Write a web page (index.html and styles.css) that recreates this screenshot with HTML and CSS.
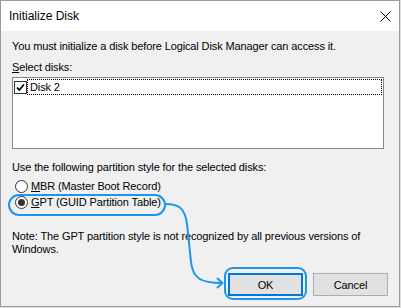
FILE: index.html
```html
<!DOCTYPE html>
<html>
<head>
<meta charset="utf-8">
<link rel="stylesheet" href="styles.css">
</head>
<body>
<div class="window">
  <div class="titlebar">
    <span class="title">Initialize Disk</span>
    <svg class="close" width="11" height="11" viewBox="0 0 11 11"><path d="M0.5 0.5 L10.5 10.5 M10.5 0.5 L0.5 10.5" stroke="#000" stroke-width="1" fill="none"/></svg>
  </div>
  <div class="content">
    <p class="intro">You must initialize a disk before Logical Disk Manager can access it.</p>
    <p class="label"><u>S</u>elect disks:</p>
    <div class="listbox">
      <div class="item">
        <span class="check"><svg width="11" height="11" viewBox="0 0 11 11"><path d="M2 5.5 L4.3 8 L9 2.5" stroke="#000" stroke-width="1.8" fill="none"/></svg></span>
        <span class="item-label">Disk 2</span>
      </div>
    </div>
    <p class="label2">Use the following partition style for the selected disks:</p>
    <div class="radios">
      <div class="radio"><span class="circle"></span><span class="rlabel"><u>M</u>BR (Master Boot Record)</span></div>
      <div class="radio"><span class="circle checked"></span><span class="rlabel"><u>G</u>PT (GUID Partition Table)</span></div>
    </div>
    <p class="note">Note: The GPT partition style is not recognized by all previous versions of<br>Windows.</p>
    <div class="buttons">
      <button class="btn default">OK</button>
      <button class="btn">Cancel</button>
    </div>
  </div>
  <svg class="annot" width="401" height="308" viewBox="0 0 401 308">
    <g fill="none" stroke="#1a96f0" stroke-width="2">
      <rect x="9" y="195" width="156" height="20" rx="10"/>
      <rect x="225" y="268" width="81" height="31" rx="8"/>
      <path d="M165 204 C180 204 185 209 187 224 L191 262 C193 278 200 283 222 283"/>
      <path d="M217 278 L222.5 283 L217 288" stroke-linejoin="round"/>
    </g>
  </svg>
</div>
</body>
</html>
```
FILE: styles.css
```css
html, body {
  margin: 0;
  padding: 0;
  background: #dedede;
}
.window {
  position: relative;
  width: 400px;
  height: 307px;
  box-sizing: border-box;
  border: 1px solid #9a9a9a;
  background: #f0f0f0;
  font-family: "Liberation Sans", Arial, sans-serif;
  font-size: 11px;
  letter-spacing: -0.12px;
  color: #000;
}
.titlebar {
  height: 30px;
  background: #fff;
  display: flex;
  align-items: center;
  justify-content: space-between;
  padding: 0 8px 0 8px;
}
.title {
  line-height: 14px;
  font-size: 12px;
  letter-spacing: 0;
}
.close {
  display: block;
  margin-top: 1px;
}
.content {
  padding: 8px 11px 0 11px;
}
p {
  margin: 0;
}
.intro, .label, .label2 {
  line-height: 14px;
  white-space: nowrap;
}
.label {
  margin-top: 7px;
}
.listbox {
  margin-top: 3px;
  width: 372px;
  height: 72px;
  box-sizing: border-box;
  border: 1px solid #828790;
  background: #fff;
}
.item {
  display: flex;
  align-items: center;
  height: 16px;
  margin-top: 1px;
}
.check {
  width: 13px;
  height: 13px;
  box-sizing: border-box;
  border: 1px solid #333;
  margin-left: 1px;
  display: flex;
  align-items: center;
  justify-content: center;
  background: #fff;
}
.check svg {
  display: block;
}
.item-label {
  flex: 1;
  height: 16px;
  box-sizing: border-box;
  border: 1px dotted #000;
  margin-right: 1px;
  padding-left: 2px;
  line-height: 14px;
}
.label2 {
  margin-top: 11px;
}
.radios {
  margin-top: 4px;
}
.radio {
  display: flex;
  align-items: center;
  height: 16px;
}
.circle {
  width: 13px;
  height: 13px;
  box-sizing: border-box;
  border: 1px solid #333;
  border-radius: 50%;
  background: #fff;
  margin-left: 3px;
  display: flex;
  align-items: center;
  justify-content: center;
}
.circle.checked::after {
  content: "";
  width: 7px;
  height: 7px;
  border-radius: 50%;
  background: #333;
}
.rlabel {
  margin-left: 3px;
  line-height: 14px;
}
.note {
  margin-top: 20px;
  line-height: 13px;
  white-space: nowrap;
}
.buttons {
  margin-top: 17px;
  display: flex;
  justify-content: flex-end;
  gap: 10px;
}
.btn {
  width: 75px;
  height: 23px;
  box-sizing: border-box;
  border: 1px solid #adadad;
  background: #e1e1e1;
  font-family: "Liberation Sans", Arial, sans-serif;
  font-size: 11px;
  letter-spacing: -0.12px;
  color: #000;
  padding: 0;
  margin: 0;
}
.btn.default {
  border: 2px solid #0078d7;
}
.annot {
  position: absolute;
  left: -1px;
  top: -1px;
  pointer-events: none;
}
```
